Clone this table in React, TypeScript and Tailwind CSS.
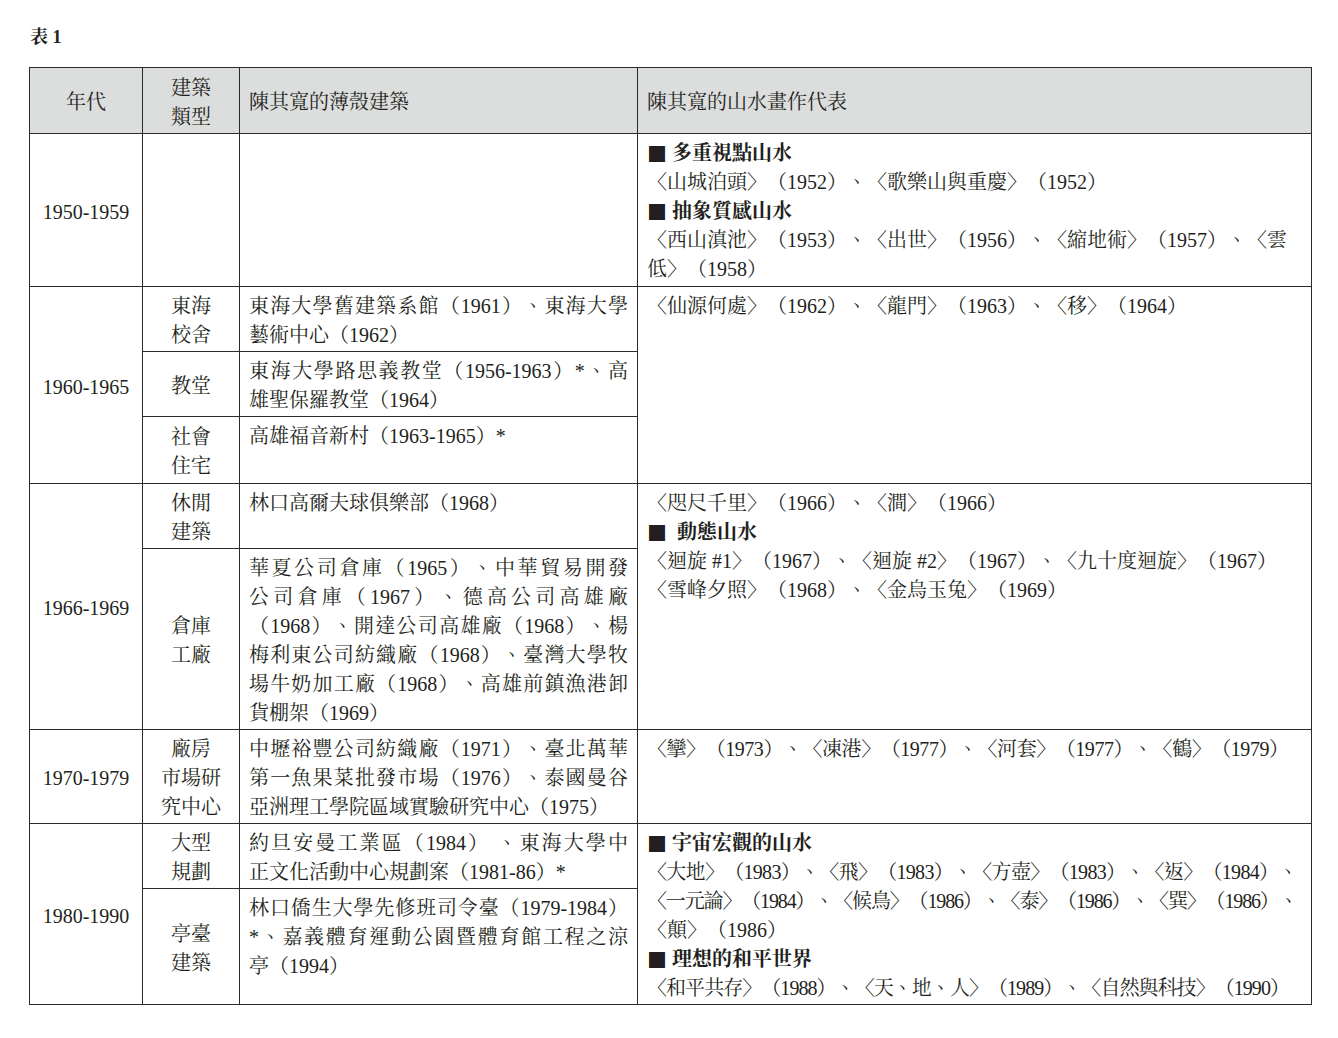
import React from "react";

const cell = "border border-[#2a2a2a] pt-[5px] pb-[1px] px-[9px]";

function J({ lines }: { lines: string[] }) {
  return (
    <>
      {lines.map((l, i) => (
        <div
          key={i}
          className={
            i < lines.length - 1
              ? "whitespace-nowrap text-justify [text-align-last:justify]"
              : "whitespace-nowrap"
          }
        >
          {l}
        </div>
      ))}
    </>
  );
}

function Sq() {
  return (
    <span className="align-top font-normal leading-[29px] [font-family:'Noto_Sans_CJK_TC',sans-serif]">■</span>
  );
}

function H({ children, wide }: { children: React.ReactNode; wide?: boolean }) {
  return (
    <div className="h-[29px] whitespace-nowrap font-bold">
      <Sq />
      {wide ? "\u00a0\u00a0" : "\u00a0"}
      {children}
    </div>
  );
}

function L({ children, cls }: { children: React.ReactNode; cls?: string }) {
  return <div className={"whitespace-nowrap " + (cls ?? "")}>{children}</div>;
}

function C2({ lines }: { lines: string[] }) {
  return (
    <>
      {lines.map((l, i) => (
        <div key={i} className="text-center">
          {l}
        </div>
      ))}
    </>
  );
}

export default function App() {
  return (
    <div className="min-h-screen bg-white pl-[29px] pr-[27px] pt-[26px] text-[#231f20] [font-family:'Liberation_Serif','Noto_Serif_CJK_TC','Noto_Sans_CJK_TC',serif] [text-spacing-trim:space-all]">
      <div className="mb-[19px] pl-[1px] text-[18px] font-bold leading-[22px]">表 1</div>
      <table className="w-[1282px] table-fixed border-collapse text-[20px] leading-[29px]">
        <colgroup>
          <col className="w-[113px]" />
          <col className="w-[97px]" />
          <col className="w-[398px]" />
          <col className="w-[674px]" />
        </colgroup>
        <thead>
          <tr className="bg-[#dcdddd]">
            <th className={cell + " h-[66px] text-center font-normal"}>年代</th>
            <th className={cell + " font-normal"}>
              <C2 lines={["建築", "類型"]} />
            </th>
            <th className={cell + " text-left font-normal"}>陳其寬的薄殼建築</th>
            <th className={cell + " text-left font-normal"}>陳其寬的山水畫作代表</th>
          </tr>
        </thead>
        <tbody>
          {/* 1950-1959 */}
          <tr>
            <td className={cell + " h-[153px] text-center"}>1950-1959</td>
            <td className={cell}></td>
            <td className={cell}></td>
            <td className={cell + " align-top"}>
              <H>多重視點山水</H>
              <L>〈山城泊頭〉（1952）、〈歌樂山與重慶〉（1952）</L>
              <H>抽象質感山水</H>
              <L>〈西山滇池〉（1953）、〈出世〉（1956）、〈縮地術〉（1957）、〈雲</L>
              <L>低〉（1958）</L>
            </td>
          </tr>

          {/* 1960-1965 */}
          <tr>
            <td className={cell + " text-center"} rowSpan={3}>
              1960-1965
            </td>
            <td className={cell}>
              <C2 lines={["東海", "校舍"]} />
            </td>
            <td className={cell + " align-top"}>
              <J lines={["東海大學舊建築系館（1961）、東海大學", "藝術中心（1962）"]} />
            </td>
            <td className={cell + " align-top"} rowSpan={3}>
              <L>〈仙源何處〉（1962）、〈龍門〉（1963）、〈移〉（1964）</L>
            </td>
          </tr>
          <tr>
            <td className={cell}>
              <C2 lines={["教堂"]} />
            </td>
            <td className={cell + " align-top"}>
              <J lines={["東海大學路思義教堂（1956-1963）*、高", "雄聖保羅教堂（1964）"]} />
            </td>
          </tr>
          <tr>
            <td className={cell + " h-[67px]"}>
              <C2 lines={["社會", "住宅"]} />
            </td>
            <td className={cell + " align-top"}>
              <J lines={["高雄福音新村（1963-1965）*"]} />
            </td>
          </tr>

          {/* 1966-1969 */}
          <tr>
            <td className={cell + " text-center"} rowSpan={2}>
              1966-1969
            </td>
            <td className={cell}>
              <C2 lines={["休閒", "建築"]} />
            </td>
            <td className={cell + " align-top"}>
              <J lines={["林口高爾夫球俱樂部（1968）"]} />
            </td>
            <td className={cell + " align-top"} rowSpan={2}>
              <L>〈咫尺千里〉（1966）、〈澗〉（1966）</L>
              <H wide>動態山水</H>
              <L>〈迴旋 #1〉（1967）、〈迴旋 #2〉（1967）、〈九十度迴旋〉（1967）</L>
              <L>〈雪峰夕照〉（1968）、〈金烏玉兔〉（1969）</L>
            </td>
          </tr>
          <tr>
            <td className={cell}>
              <C2 lines={["倉庫", "工廠"]} />
            </td>
            <td className={cell + " align-top"}>
              <J
                lines={[
                  "華夏公司倉庫（1965）、中華貿易開發",
                  "公司倉庫（1967）、德高公司高雄廠",
                  "（1968）、開達公司高雄廠（1968）、楊",
                  "梅利東公司紡織廠（1968）、臺灣大學牧",
                  "場牛奶加工廠（1968）、高雄前鎮漁港卸",
                  "貨棚架（1969）",
                ]}
              />
            </td>
          </tr>

          {/* 1970-1979 */}
          <tr>
            <td className={cell + " text-center"}>1970-1979</td>
            <td className={cell}>
              <C2 lines={["廠房", "市場研", "究中心"]} />
            </td>
            <td className={cell + " align-top"}>
              <J
                lines={[
                  "中壢裕豐公司紡織廠（1971）、臺北萬華",
                  "第一魚果菜批發市場（1976）、泰國曼谷",
                  "亞洲理工學院區域實驗研究中心（1975）",
                ]}
              />
            </td>
            <td className={cell + " align-top"}>
              <L cls="tracking-[-0.45px]">〈攣〉（1973）、〈凍港〉（1977）、〈河套〉（1977）、〈鶴〉（1979）</L>
            </td>
          </tr>

          {/* 1980-1990 */}
          <tr>
            <td className={cell + " text-center"} rowSpan={2}>
              1980-1990
            </td>
            <td className={cell}>
              <C2 lines={["大型", "規劃"]} />
            </td>
            <td className={cell + " align-top"}>
              <J lines={["約旦安曼工業區（1984） 、東海大學中", "正文化活動中心規劃案（1981-86）*"]} />
            </td>
            <td className={cell + " align-top"} rowSpan={2}>
              <H>宇宙宏觀的山水</H>
              <L cls="tracking-[-0.7px]">〈大地〉（1983）、〈飛〉（1983）、〈方壺〉（1983）、〈返〉（1984）、</L>
              <L cls="tracking-[-1.15px]">〈一元論〉（1984）、〈候鳥〉（1986）、〈泰〉（1986）、〈巽〉（1986）、</L>
              <L>〈顛〉（1986）</L>
              <H>理想的和平世界</H>
              <L cls="tracking-[-0.95px]">〈和平共存〉（1988）、〈天、地、人〉（1989）、〈自然與科技〉（1990）</L>
            </td>
          </tr>
          <tr>
            <td className={cell}>
              <C2 lines={["亭臺", "建築"]} />
            </td>
            <td className={cell + " align-top h-[116px]"}>
              <J
                lines={[
                  "林口僑生大學先修班司令臺（1979-1984）",
                  "*、嘉義體育運動公園暨體育館工程之涼",
                  "亭（1994）",
                ]}
              />
            </td>
          </tr>
        </tbody>
      </table>
    </div>
  );
}
